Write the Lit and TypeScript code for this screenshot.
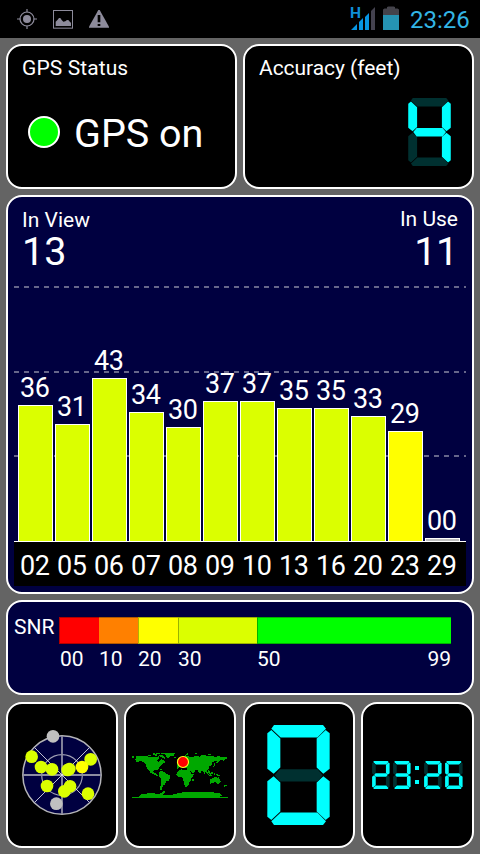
import { LitElement, html, svg, css } from "lit";
import { customElement, property } from "lit/decorators.js";

const SEGMENTS: Record<string, string> = {
  a: "21,0 168,0 177,11 151,38 41,38 13,11",
  b: "176,15 188,25 188,132 169,147 149,128 149,41",
  c: "176,286 188,276 188,169 169,154 149,173 149,260",
  d: "21,301 168,301 177,290 151,263 41,263 13,290",
  e: "13,286 1,276 1,169 20,154 40,173 40,260",
  f: "13,15 1,25 1,132 20,147 40,128 40,41",
  g: "23,151 38,133 152,133 167,151 152,170 38,170",
};

const LIT: Record<string, string> = {
  "0": "abcdef", "2": "abdeg", "3": "abcdg", "4": "bcfg", "6": "acdefg",
};

@customElement("seven-segment")
class SevenSegment extends LitElement {
  @property() digit = "0";
  static styles = css`
    :host { display: block; }
    svg { display: block; width: 100%; height: 100%; }
    .on { fill: #00ffff; }
    .off { fill: #003030; }
  `;
  render() {
    const lit = LIT[this.digit] ?? "";
    return html`<svg viewBox="0 0 189 301" preserveAspectRatio="none">
      ${Object.entries(SEGMENTS).map(([k, p]) =>
        svg`<polygon class=${lit.includes(k) ? "on" : "off"} points=${p}></polygon>`)}
    </svg>`;
  }
}

@customElement("status-bar")
class StatusBar extends LitElement {
  static styles = css`
    :host { display: flex; align-items: center; height: 38px; background: #000; }
    svg { display: block; flex: none; }
    .left { width: 120px; height: 38px; }
    .right { width: 60px; height: 38px; margin-left: auto; }
    .h { font: 700 15px Roboto, sans-serif; fill: #0f8fd6; }
    .time { width: 80px; padding-left: 10px; box-sizing: border-box; font-size: 24px; line-height: 40px; margin-top: 1px; color: #33b5e5; white-space: nowrap; }
  `;
  render() {
    return html`
      <svg class="left" viewBox="0 0 360 114">
        <g fill="none" stroke="#8d8b9b" stroke-width="3.6">
          <circle cx="81" cy="57" r="21"></circle>
          <path d="M81 27v10M81 77v10M51 57h10M101 57h10"></path>
          <rect x="160.500" y="31.500" width="57" height="53" stroke-width="3"></rect>
        </g>
        <g fill="#8d8b9b">
          <circle cx="81" cy="57" r="12"></circle>
          <path d="M167 78V65l6-6 4-5h4l4 6 5 5 6-1 5-4 5 1 4 5 3 2v10z"></path>
          <path d="M295 30h4l28 50v3h-60v-3z"></path>
        </g>
        <path d="M293 45h8v22h-8zM293 72h8v6h-8z" fill="#000"></path>
      </svg>
      <svg class="right" viewBox="0 0 60 38">
        <text class="h" x="10" y="17.500" textLength="11" lengthAdjust="spacingAndGlyphs">H</text>
        <g fill="#0795e3">
          <path d="M11 30l6-6v6zM19 30v-8l4-4v12zM25 30V17l4-4v17z"></path>
        </g>
        <path d="M31 30V11l4-4v23z" fill="#44424f"></path>
        <path d="M43 15v-5.500l1.500-1H47V7l1.500-.5h5L55 7v1.500h2.500l1.500 1V15z" fill="#44434b"></path>
        <path d="M43 15h16v15H43z" fill="#2593b3"></path>
      </svg>
      <div class="time">23:26</div>`;
  }
}

interface Sat { id: string; snr: string; h: number; cls: string; }
const SATS: Sat[] = [
  { id: "02", snr: "36", h: 136, cls: "" },
  { id: "05", snr: "31", h: 117, cls: "" },
  { id: "06", snr: "43", h: 163, cls: "" },
  { id: "07", snr: "34", h: 129, cls: "" },
  { id: "08", snr: "30", h: 114, cls: "" },
  { id: "09", snr: "37", h: 140, cls: "" },
  { id: "10", snr: "37", h: 140, cls: "" },
  { id: "13", snr: "35", h: 133, cls: "" },
  { id: "16", snr: "35", h: 133, cls: "" },
  { id: "20", snr: "33", h: 125, cls: "" },
  { id: "23", snr: "29", h: 110, cls: "yellow" },
  { id: "29", snr: "00", h: 3, cls: "grey" },
];

@customElement("satellite-chart")
class SatelliteChart extends LitElement {
  static styles = css`
    :host { display: block; }
    .plot { position: relative; height: 255px; border-bottom: 1px solid #fff; }
    .lines { position: absolute; inset: 0; display: flex; flex-direction: column; }
    .line { height: 2px; margin-bottom: 83px; flex: none; background: repeating-linear-gradient(90deg, #66668a 0 5px, transparent 5px 10px); }
    .line + .line { margin-bottom: 82px; }
    .bars { position: relative; display: flex; gap: 2px; align-items: flex-end; height: 255px; padding-left: 4px; }
    .col { width: 35px; display: flex; flex-direction: column; align-items: center; }
    .snr { font-size: 27px; line-height: 28px; margin-bottom: 3px; margin-right: 1.500px; letter-spacing: -.3px; }
    .bar { width: 35px; box-sizing: border-box; border: 1px solid #fff; border-bottom: 0; background: #dbff00; }
    .bar.yellow { background: #ff0; }
    .bar.grey { background: #c0c0c0; }
    .ids { display: flex; gap: 2px; padding-left: 4px; height: 44px; background: #000; }
    .id { width: 33.500px; margin-right: 1.500px; text-align: center; font-size: 27px; line-height: 48px; letter-spacing: -.3px; }
  `;
  render() {
    return html`
      <div class="plot">
        <div class="lines"><div class="line"></div><div class="line"></div><div class="line"></div></div>
        <div class="bars">
          ${SATS.map((s) => html`<div class="col">
            <div class="snr">${s.snr}</div>
            <div class="bar ${s.cls}" style="height:${s.h}px"></div>
          </div>`)}
        </div>
      </div>
      <div class="ids">${SATS.map((s) => html`<div class="id">${s.id}</div>`)}</div>`;
  }
}

const DOTS: [number, number, string][] = [
  [159, 121, "#c0c0c0"], [169, 323, "#c0c0c0"],
  [95, 182, "#dbff00"], [123, 213, "#dbff00"], [156, 220, "#dbff00"],
  [203, 222, "#dbff00"], [208, 219, "#dbff00"], [141, 270, "#dbff00"],
  [210, 271, "#dbff00"], [193, 286, "#dbff00"], [264, 293, "#dbff00"],
  [272, 190, "#dbff00"], [246, 213, "#ffff00"],
];

@customElement("sky-view")
class SkyView extends LitElement {
  static styles = css`:host, svg { display: block; width: 108px; height: 142px; }`;
  render() {
    return html`<svg viewBox="24 24 324 426">
      <circle cx="186" cy="237" r="117.500" fill="#000040" stroke="#b4b4b8" stroke-width="4.500"></circle>
      <circle cx="186" cy="237" r="61" fill="none" stroke="#a0a0b4" stroke-width="3.500"></circle>
      <path d="M186 120v234M69 237h234" stroke="#8c8ca2" stroke-width="5.500"></path>
      <path d="M104 155l164 164M268 155l-164 164" stroke="#e8e8f0" stroke-width="2.500"></path>
      ${DOTS.map(([x, y, c]) => svg`<circle cx=${x} cy=${y} r="19" fill=${c}></circle>`)}
    </svg>`;
  }
}

@customElement("world-map")
class WorldMap extends LitElement {
  static styles = css`
    :host, svg { display: block; width: 96px; height: 46px; }
    .land { fill: #00a800; shape-rendering: crispEdges; }
  `;
  render() {
    return html`<svg viewBox="36 66 288 138">
      <g class="land">
        <path d="M36 79h5v4h-5zM48 78h24l6-1 6 3h15l6 2h9l3 4h-3l-3 6 3 4 9-9 6 3 6 6-3 3-9 6-3 4-3 5-3 3 1 5-4-3-9 1-3 6 3 3 5-1 3 6 4 3-1 2-8-4-6-3-8-4-3-6-8-9-2-9-8-8-9-3-9 3h-6l3-3-3-3z"></path>
        <path d="M84 75h9v3h-9zM98 69h6v6h-6zM105 73h6v5h-6zM108 69h12v3h-12zM118 75h8l7 6 2 5-6-1-4-4-7-3zM113 79h5v6h-5z"></path>
        <path d="M124 69l9-1h31v4l-4 6-9 1-6 6-4-1-3-8-8-5h-6z"></path>
        <path d="M117 126l6-3 12 3 3 6 13 4-1 6-4 10-8 3-3 8-5 3-4 9 1 6h-5l-2-6 3-12 1-15-5-7-2-6z"></path>
        <path d="M119 118h7v3h-7zM162 81h6v3h-6z"></path>
        <path d="M171 105v-6l7-1-1-6 6-4 3-7 10-5 12 2 1 4 12-2 6-2 12 2 4-5h11l9 3 12-1 8 3 14-1 25 3v4l-7 1-4 6-3-4-9 2-4 5-4 7-2-5 2-5-7 1-8 3-1 7-5 5h-3l-1 6-5 7-2 5-5 1 3 8-4-3-2-8-4-3-5 4-2 7-4-7-3-5-6-2-5 1 4 4-6 6-6-4-5-8 4 12 3 3h6l-3 7-6 6-2 8-3 3-2 7-5 6-5 1-4-9-3-16-4-5-12-1-4-6 2-8 6-6 9-2 5 2 6 1 5-1-2-5-5-2-5 1-7-3-6 2-6 5z"></path>
        <path d="M171 88l4-4 2 5-3 5-3-1zM195 72l9-3 2 3-6 3zM226 70l6-1v3h-6zM264 73h8v3h-8zM217 146h4v8h-4z"></path>
        <path d="M283 101l3-3v7l-5 6-2-2 4-3zM265 121h3l2 6 4 6-3 1-6-7zM257 122l6 6 4 8-3-1-6-7zM267 135h9v3h-9zM274 126l5 1-2 6h-4zM282 129l3 1-2 6h-3zM288 131l12 5-2 3-9-4z"></path>
        <path d="M271 148l7-3 5-4h7l2 4 4-5 5 11 1 5-5 6h-6l-5-5-8 1-7 3zM315 165h6l-3 3h-3v3h-4v-3z"></path>
        <path d="M36 201h18l3-3 9-6 21-2 33 1 9-6 6-3v6l-6 6 15 2 24-4 8-3 18-3 24 1 12-2 24 1 24 1 24 4 3 6-6 3 9 1h16v3H36z"></path>
      </g>
      <circle cx="189" cy="96" r="16.500" fill="#ff0000" stroke="#ffff20" stroke-width="3.500"></circle>
    </svg>`;
  }
}

@customElement("app-root")
class AppRoot extends LitElement {
  static styles = css`
    :host { display: block; width: 480px; height: 854px; overflow: hidden; background: #646464; color: #fff; font-family: Roboto, sans-serif; }
    .page { padding: 6px; display: flex; flex-direction: column; gap: 6px; }
    .row { display: grid; grid-template-columns: 231px 231px; gap: 6px; height: 145px; }
    .card { box-sizing: border-box; border: 2px solid #fff; border-radius: 16px; background: #000; white-space: nowrap; }
    .navy { background: #000040; }
    .title { font-size: 21px; line-height: 24px; padding: 10px 14px 0; letter-spacing: .1px; }
    .title.tight { letter-spacing: -.05px; }
    .status { display: flex; align-items: center; padding: 27px 0 0 20px; gap: 14px; font-size: 39.500px; line-height: 54px; }
    .lamp { width: 32px; height: 32px; box-sizing: border-box; border: 2px solid #fff; border-radius: 50%; background: #0f0; margin-top: -4px; }
    .acc { width: 43px; height: 68px; margin: 18px 0 0 163px; }
    .view { height: 399px; }
    .counts { display: flex; justify-content: space-between; height: 89px; box-sizing: border-box; padding: 11px 14px 0; font-size: 21px; line-height: 24px; }
    .counts .right { text-align: right; margin-top: -1px; }
    .big { font-size: 39.500px; line-height: 40px; }
    .counts .right .big { letter-spacing: -.3px; margin-top: 1px; }
    .chart { margin: 0 6px; }
    .snr { height: 95px; display: flex; padding: 15px 0 0 6px; font-size: 21px; }
    .name { width: 45px; line-height: 21px; }
    .scale { display: grid; grid-template-columns: 40px 39px 40px 79px 194px; grid-template-rows: 27px 31px; }
    .sw { box-sizing: border-box; border: 1px solid rgba(0,0,0,.3); border-right: 0; }
    .red { background: #f00; }
    .orange { background: #ff8000; border-left: 0; }
    .yellow { background: #ff0; }
    .lime { background: #dbff00; }
    .green { background: #0f0; }
    .lab { line-height: 31px; display: flex; justify-content: space-between; }
    .lab.first { padding-left: 1px; }
    .tiles { display: grid; grid-template-columns: 112px 112px 112px 113px; column-gap: 6.330px; height: 146px; margin-top: 1px; }
    .tile { display: flex; align-items: center; justify-content: center; }
    .speed { width: 63px; height: 100px; }
    .clock { display: flex; }
    .d { width: 17.700px; height: 28px; }
    .d + .d { margin-left: 3.300px; }
    .colon { width: 4px; height: 28px; margin: 0 4.800px; display: flex; flex-direction: column; justify-content: space-between; box-sizing: border-box; padding: 5px 0; }
    .colon i { width: 4px; height: 4px; background: #0ff; }
  `;
  render() {
    return html`
      <status-bar></status-bar>
      <div class="page">
        <div class="row">
          <div class="card">
            <div class="title">GPS Status</div>
            <div class="status"><div class="lamp"></div><div>GPS on</div></div>
          </div>
          <div class="card">
            <div class="title tight">Accuracy (feet)</div>
            <seven-segment class="acc" digit="4"></seven-segment>
          </div>
        </div>
        <div class="card navy view">
          <div class="counts">
            <div>In View<div class="big">13</div></div>
            <div class="right">In Use<div class="big">11</div></div>
          </div>
          <satellite-chart class="chart"></satellite-chart>
        </div>
        <div class="card navy snr">
          <div class="name">SNR</div>
          <div class="scale">
            <div class="sw red"></div><div class="sw orange"></div><div class="sw yellow"></div><div class="sw lime"></div><div class="sw green"></div>
            <div class="lab first">00</div><div class="lab">10</div><div class="lab">20</div><div class="lab">30</div>
            <div class="lab"><span>50</span><span>99</span></div>
          </div>
        </div>
        <div class="tiles">
          <div class="card tile"><sky-view></sky-view></div>
          <div class="card tile"><world-map></world-map></div>
          <div class="card tile"><seven-segment class="speed" digit="0"></seven-segment></div>
          <div class="card tile">
            <div class="clock">
              <seven-segment class="d" digit="2"></seven-segment>
              <seven-segment class="d" digit="3"></seven-segment>
              <div class="colon"><i></i><i></i></div>
              <seven-segment class="d" digit="2"></seven-segment>
              <seven-segment class="d" digit="6"></seven-segment>
            </div>
          </div>
        </div>
      </div>`;
  }
}
